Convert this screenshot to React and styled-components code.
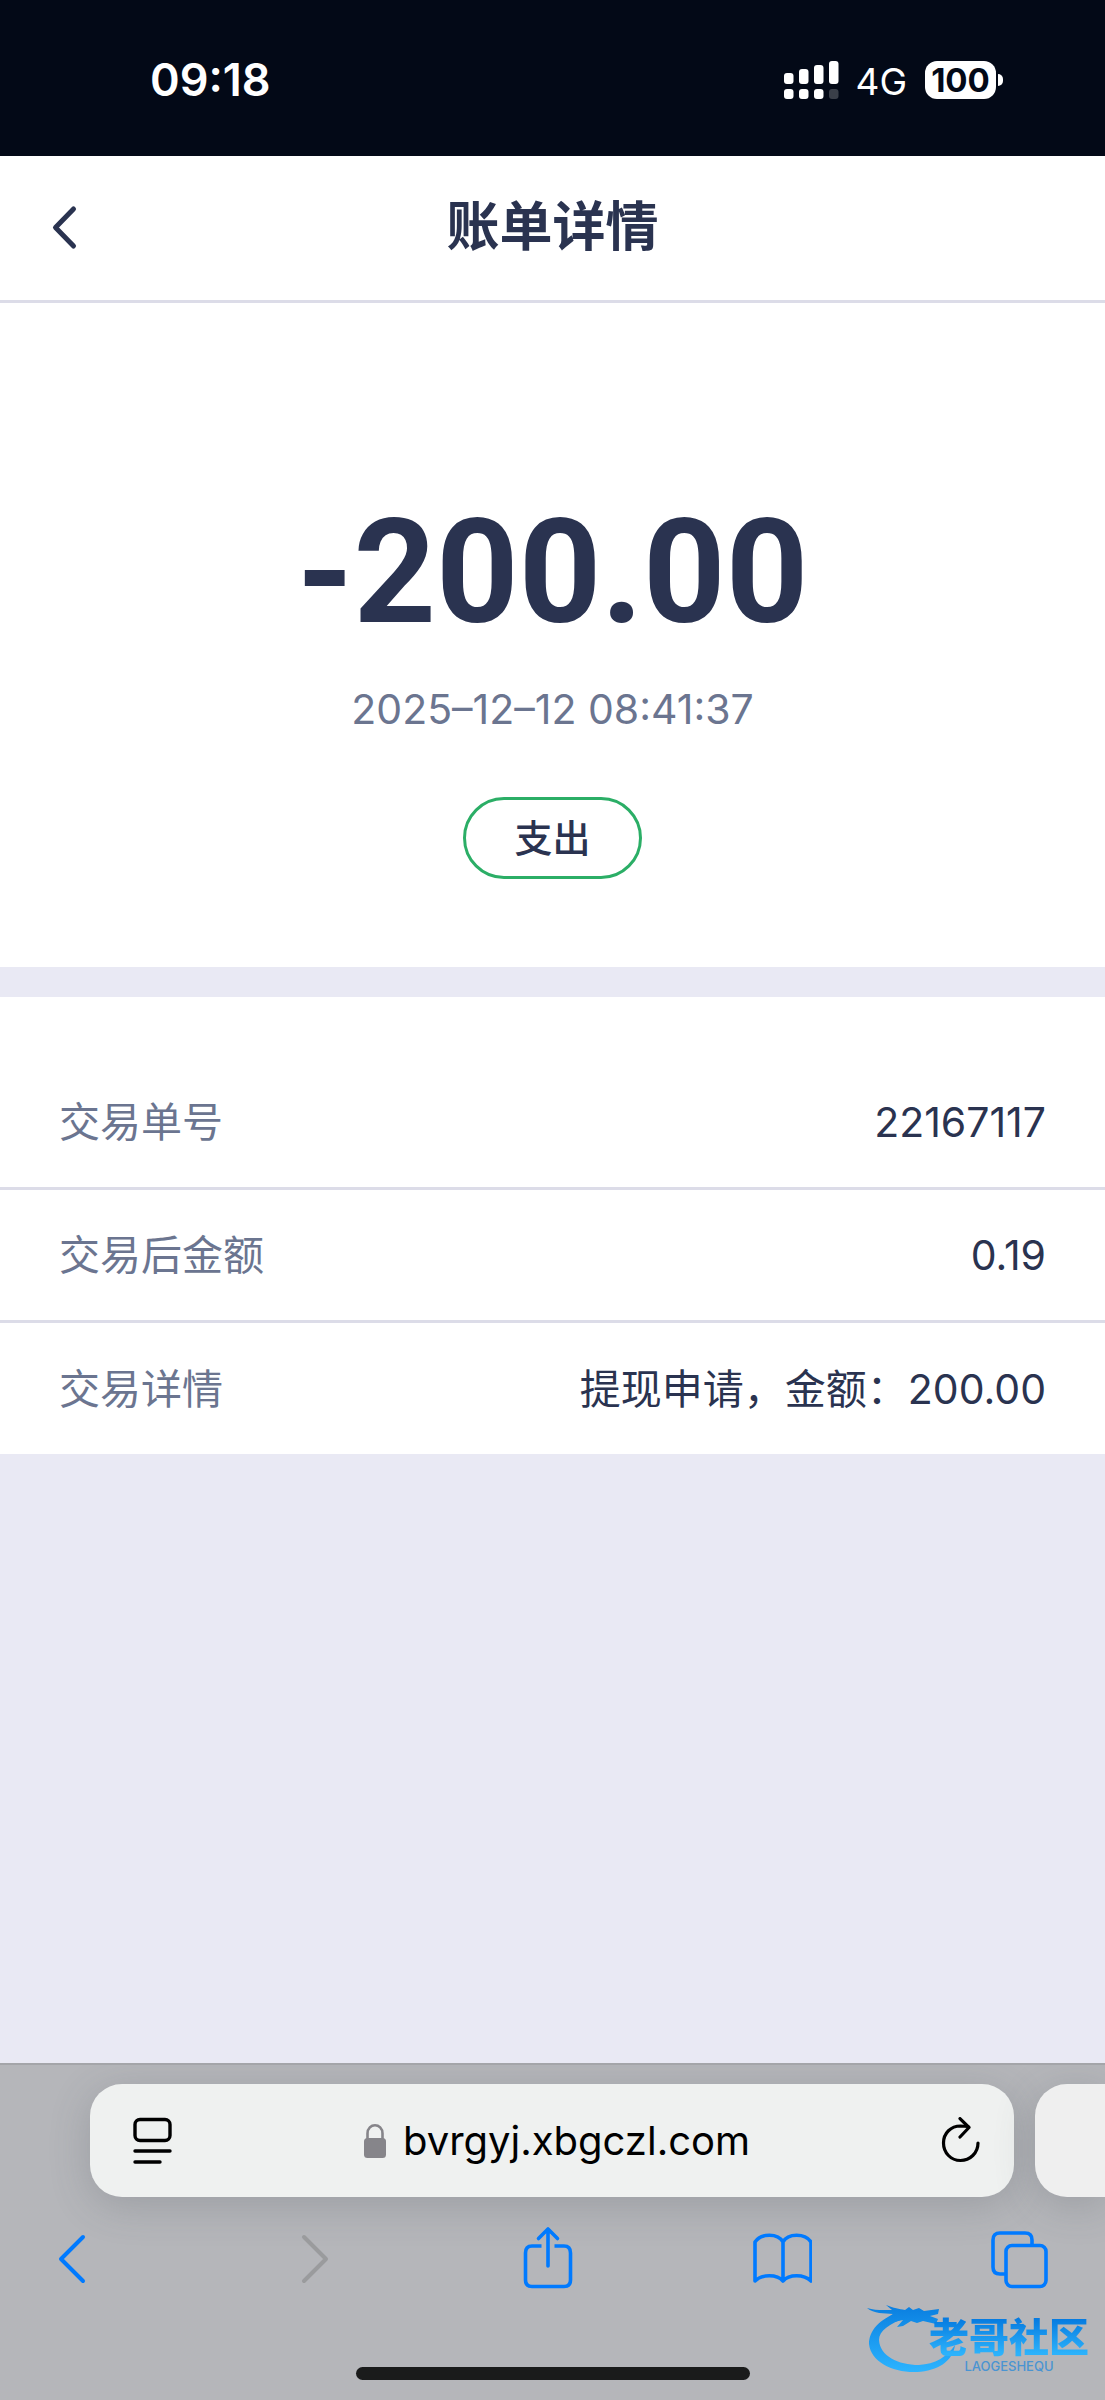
import React from 'react';
import styled, { createGlobalStyle } from 'styled-components';

const sans = `Inter, "Noto Sans CJK SC", sans-serif`;

const GlobalStyle = createGlobalStyle`
  *, *::before, *::after { box-sizing: border-box; }
  body { margin: 0; background: #e9e9f4; font-family: ${sans}; }
  button { border: 0; padding: 0; background: none; font: inherit; color: inherit; cursor: pointer; }
  svg { display: block; flex: none; }
`;

const Screen = styled.div`
  min-height: 100vh;
  display: flex;
  flex-direction: column;
  color: #2a3350;
`;

const StatusBar = styled.div`
  display: flex;
  align-items: center;
  justify-content: space-between;
  height: 156px;
  padding: 4px 102px 0 150px;
  background: #030917;
  color: #fff;
`;

const Clock = styled.time`
  font-size: 45px;
  line-height: 56px;
  font-weight: 600;
`;

const StatusIcons = styled.div`
  display: flex;
  align-items: center;
`;

const Network = styled.span`
  margin: 4px 18px 0 16px;
  font-size: 37px;
  line-height: 44px;
`;

const Battery = styled.span`
  display: flex;
  align-items: center;
  justify-content: center;
  width: 71px;
  height: 38px;
  border-radius: 12px;
  background: #fff;
  color: #030917;
  font-size: 33px;
  line-height: 38px;
  font-weight: 700;
`;

const BatteryTip = styled.span`
  width: 5px;
  height: 12px;
  margin-left: 2px;
  border-radius: 0 6px 6px 0;
  background: #fff;
`;

const Header = styled.header`
  display: grid;
  grid-template-columns: 1fr auto 1fr;
  align-items: center;
  height: 147px;
  padding: 0 40px 3px;
  border-bottom: 3px solid #dcdce8;
  background: #fff;
`;

const BackButton = styled.button`
  justify-self: start;
`;

const Title = styled.h1`
  margin: 0;
  font-size: 53px;
  line-height: 72px;
  font-weight: 600;
`;

const Summary = styled.section`
  display: flex;
  flex-direction: column;
  align-items: center;
  padding: 187px 40px 88px;
  background: #fff;
`;

const Amount = styled.strong`
  font-family: Roboto, sans-serif;
  font-size: 144px;
  line-height: 166px;
  font-weight: 700;
`;

const DateText = styled.time`
  margin-top: 25px;
  font-size: 41px;
  line-height: 56px;
  color: #6b7590;
`;

const Tag = styled.span`
  margin-top: 60px;
  padding: 10px 48px;
  border: 3px solid #2bae66;
  border-radius: 41px;
  font-size: 38px;
  line-height: 56px;
  font-weight: 500;
`;

const Details = styled.dl`
  margin: 30px 0 0;
  padding-top: 60px;
  background: #fff;
`;

const Row = styled.div`
  display: flex;
  align-items: center;
  justify-content: space-between;
  height: 133px;
  padding: 0 59px;
  border-bottom: 3px solid #dcdce8;
  font-size: 41px;
  line-height: 56px;

  &:last-child {
    height: 131px;
    border-bottom: 0;
  }
`;

const Label = styled.dt`
  color: #6b7590;
`;

const Value = styled.dd`
  margin: 0;
`;

const Spacer = styled.div`
  flex: 1;
`;

const Browser = styled.footer`
  position: relative;
  display: flex;
  flex-direction: column;
  height: 337px;
  padding-top: 19px;
  border-top: 2px solid #a4a5a9;
  background: #b5b6ba;
  overflow: hidden;
`;

const TabStrip = styled.div`
  display: flex;
  gap: 21px;
  padding-left: 90px;
`;

const AddressBar = styled.div`
  flex: 1;
  display: flex;
  align-items: center;
  justify-content: space-between;
  height: 113px;
  padding: 0 34px 0 43px;
  border-radius: 32px;
  background: #eff1f0;
  color: #000;
  box-shadow: 0 8px 40px rgba(70, 78, 86, 0.24);
`;

const NextTab = styled.div`
  width: 70px;
  height: 113px;
  border-radius: 32px 0 0 32px;
  background: #efefef;
  box-shadow: 0 8px 40px rgba(70, 78, 86, 0.24);
`;

const Address = styled.button`
  display: flex;
  align-items: center;
  gap: 16px;
  font-size: 40px;
  line-height: 56px;
`;

const Toolbar = styled.nav`
  display: flex;
  justify-content: space-between;
  padding: 26px 56px 0 42px;
  color: #007aff;
`;

const ToolButton = styled.button`
  width: 60px;
  height: 70px;

  &:disabled { color: #9a9b9d; cursor: default; }
`;

const HomeIndicator = styled.div`
  width: 394px;
  height: 13px;
  margin: auto auto 20px;
  border-radius: 7px;
  background: #1a1b1b;
`;

const Watermark = styled.div`
  position: absolute;
  right: 16px;
  bottom: 26px;
  display: flex;
  align-items: flex-start;
`;

const WatermarkText = styled.div`
  display: flex;
  flex-direction: column;
  align-items: center;
  margin-left: -38px;
  padding-top: 10px;
`;

const WatermarkName = styled.span`
  font-family: "Noto Sans CJK SC", sans-serif;
  font-size: 40px;
  line-height: 46px;
  font-weight: 900;
  background: linear-gradient(#067be0 15%, #2cb2fb 90%);
  background-clip: text;
  color: transparent;
`;

const WatermarkSub = styled.span`
  font-size: 13px;
  line-height: 16px;
  font-weight: 500;
  color: #4a94d2;
`;

const signal = [[0, 12, 11], [15, 8, 15], [30, 4, 19], [45, 0, 23]];

function SignalIcon() {
  return (
    <svg width="55" height="38" viewBox="0 0 55 38" fill="#fff" role="img" aria-label="信号">
      {signal.map(([x, y, h]) => (
        <React.Fragment key={x}>
          <rect x={x} y={y} width="9.5" height={h} rx="3" />
          <rect x={x} y="28" width="9.5" height="10" rx="3" opacity={x === 45 ? 0.22 : 1} />
        </React.Fragment>
      ))}
    </svg>
  );
}

function Icon({ width = 60, height = 70, stroke = 3.6, children }) {
  return (
    <svg width={width} height={height} viewBox={`0 0 ${width} ${height}`} fill="none" stroke="currentColor"
      strokeWidth={stroke} strokeLinecap="round" strokeLinejoin="round" aria-hidden="true">
      {children}
    </svg>
  );
}

function DragonLogo() {
  return (
    <svg width="100" height="72" viewBox="0 0 100 72" fill="url(#dragon)" aria-hidden="true">
      <defs>
        <linearGradient id="dragon" gradientUnits="userSpaceOnUse" x1="0" y1="4" x2="0" y2="70">
          <stop offset="0" stopColor="#0a7fe0" />
          <stop offset="1" stopColor="#2cb4ff" />
        </linearGradient>
      </defs>
      <path d="M32 10C12 17 2 29 2 42C4 60 26 71 50 70C71 69 86 59 88 43C80 55 68 62 52 63C31 63 13 54 12 38C12 29 22 22 40 15Z" />
      <path d="M0 6C8 8.500 15 8 25 8L19 3C27 6 32 7 38 8L42 5L46 8L52 6L57 9L72 7L71 12L63 14L71 17L69 22L56 19L50 21L44 19L36 24L30 25L36 18L27 20L30 14L22 15L26 12C17 11 7 12 0 6Z" />
    </svg>
  );
}

const rows = [
  ['交易单号', '22167117'],
  ['交易后金额', '0.19'],
  ['交易详情', '提现申请，金额：200.00'],
];

export default function App() {
  return (
    <Screen>
      <GlobalStyle />
      <StatusBar>
        <Clock>09:18</Clock>
        <StatusIcons>
          <SignalIcon />
          <Network>4G</Network>
          <Battery>100</Battery>
          <BatteryTip />
        </StatusIcons>
      </StatusBar>

      <Header>
        <BackButton aria-label="返回">
          <Icon width={50} height={60} stroke={5}>
            <path d="M33.500 12L15.500 30.500L33.500 49" />
          </Icon>
        </BackButton>
        <Title>账单详情</Title>
      </Header>

      <main>
        <Summary>
          <Amount>-200.00</Amount>
          <DateText>2025–12–12 08:41:37</DateText>
          <Tag>支出</Tag>
        </Summary>
        <Details>
          {rows.map(([label, value]) => (
            <Row key={label}>
              <Label>{label}</Label>
              <Value>{value}</Value>
            </Row>
          ))}
        </Details>
      </main>

      <Spacer />

      <Browser>
        <TabStrip>
          <AddressBar>
            <button aria-label="页面设置">
              <Icon width={40} height={48} stroke={3.4}>
                <rect x="2" y="2.500" width="35" height="21" rx="5" />
                <path d="M2 34H37M2 45H27" />
              </Icon>
            </button>
            <Address>
              <svg width="24" height="36" viewBox="0 0 24 36" aria-hidden="true">
                <path d="M4.500 16V10.500C4.500 -.5 19.500 -.5 19.500 10.500V16" fill="none" stroke="#86858a" strokeWidth="2.600" />
                <rect x="1" y="15" width="22" height="20" rx="3.500" fill="#86858a" />
              </svg>
              bvrgyj.xbgczl.com
            </Address>
            <button aria-label="刷新">
              <Icon width={40} height={48} stroke={3.2}>
                <path d="M38 26C38 36 30 43.500 20.500 43.500C11 43.500 3.500 36 3.500 26C3.500 16 11 9 20.500 9L28 9.500" />
                <path d="M20 1.600L29 10.500L20 20" />
              </Icon>
            </button>
          </AddressBar>
          <NextTab />
        </TabStrip>
        <Toolbar>
          <ToolButton aria-label="后退">
            <Icon stroke={4}><path d="M41 14L19 36L41 58" /></Icon>
          </ToolButton>
          <ToolButton aria-label="前进" disabled>
            <Icon stroke={4}><path d="M25 14L47 36L25 58" /></Icon>
          </ToolButton>
          <ToolButton aria-label="分享">
            <Icon>
              <path d="M25.500 23H16Q9.500 23 9.500 30V57Q9.500 63.500 16 63.500H48Q54.500 63.500 54.500 57V30Q54.500 23 48 23H38.500" strokeLinecap="butt" />
              <path d="M32 43V6M22.500 15.500L32 6L41.500 15.500" />
            </Icon>
          </ToolButton>
          <ToolButton aria-label="书签">
            <Icon>
              <path d="M31 19C26 10 9 10 3 19V58C10 51 25 51 31 58C37 51 52 51 59 58V19C53 10 36 10 31 19V58" />
            </Icon>
          </ToolButton>
          <ToolButton aria-label="标签页">
            <Icon>
              <path d="M43 22V17Q43 10 36 10H11Q4 10 4 17V44Q4 51 11 51H16" />
              <rect x="17" y="22.500" width="40" height="41" rx="6" />
            </Icon>
          </ToolButton>
        </Toolbar>
        <HomeIndicator />
        <Watermark>
          <DragonLogo />
          <WatermarkText>
            <WatermarkName>老哥社区</WatermarkName>
            <WatermarkSub>LAOGESHEQU</WatermarkSub>
          </WatermarkText>
        </Watermark>
      </Browser>
    </Screen>
  );
}
